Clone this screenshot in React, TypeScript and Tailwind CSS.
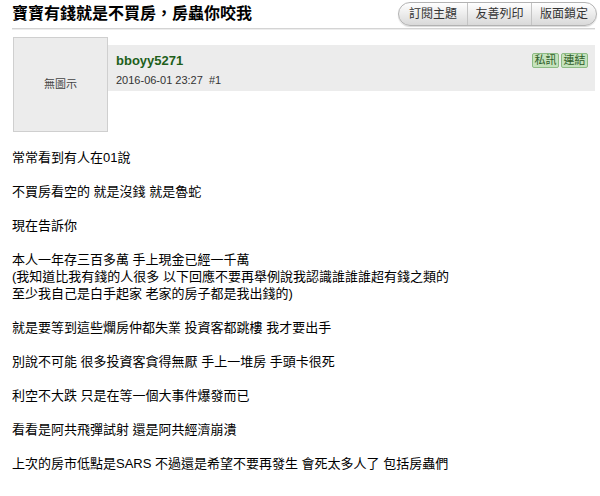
import React from 'react';

const FONT = '"Liberation Sans", Arial, "Noto Sans CJK TC", sans-serif';

const lines: string[][] = [
  ['常常看到有人在01說'],
  ['不買房看空的 就是沒錢 就是魯蛇'],
  ['現在告訴你'],
  [
    '本人一年存三百多萬 手上現金已經一千萬',
    '(我知道比我有錢的人很多 以下回應不要再舉例說我認識誰誰誰超有錢之類的',
    '至少我自己是白手起家 老家的房子都是我出錢的)',
  ],
  ['就是要等到這些爛房仲都失業 投資客都跳樓 我才要出手'],
  ['別說不可能 很多投資客貪得無厭 手上一堆房 手頭卡很死'],
  ['利空不大跌 只是在等一個大事件爆發而已'],
  ['看看是阿共飛彈試射 還是阿共經濟崩潰'],
  ['上次的房市低點是SARS 不過還是希望不要再發生 會死太多人了 包括房蟲們'],
];

function TopButtons() {
  const items = [
    { label: '訂閱主題', w: 'w-[68px]' },
    { label: '友善列印', w: 'w-[64px]' },
    { label: '版面鎖定', w: 'w-[65px]' },
  ];
  return (
    <div className="flex h-[24px] rounded-full border border-[#b3b3b3] bg-gradient-to-b from-[#ffffff] to-[#d9d9d9] overflow-hidden shadow-[0_1px_1px_rgba(0,0,0,0.15)]">
      {items.map((it, i) => (
        <div
          key={it.label}
          className={`${it.w} flex items-center justify-center text-[12px] text-[#333] ${
            i > 0 ? 'border-l border-[#c4c4c4]' : ''
          }`}
        >
          {it.label}
        </div>
      ))}
    </div>
  );
}

function SmallButton({ label }: { label: string }) {
  return (
    <div className="h-[15px] w-[27px] flex items-center justify-center rounded-[2px] border border-[#8dbb84] bg-[#c5e3bd] text-[11px] leading-none text-[#2d5b26]">
      {label}
    </div>
  );
}

export default function App() {
  return (
    <div className="w-[600px] h-[496px] bg-white overflow-hidden text-black" style={{ fontFamily: FONT }}>
      {/* Title row */}
      <div className="flex items-center justify-between h-[26px] pl-3 pr-[3px] pt-[1px]">
        <h1 className="text-[16px] font-bold leading-none">寶寶有錢就是不買房，房蟲你咬我</h1>
        <TopButtons />
      </div>
      <div className="ml-3 mr-[5px] mt-[2px] border-t border-[#d4d4d4] border-b border-b-[#ededed]" />

      {/* Post header */}
      <div className="flex ml-[13px] mr-[5px] mt-[7px]">
        <div className="w-[95px] h-[95px] shrink-0 bg-[#ececec] border border-[#cfcfcf] flex items-center justify-center text-[11px] text-[#444]">
          無圖示
        </div>
        <div className="flex-1 mt-[8px] h-[46px] bg-[#ececec] flex justify-between pl-2 pr-[7px]">
          <div className="pt-[8px]">
            <div className="text-[13px] font-bold leading-[16px] text-[#215f1a]">bboyy5271</div>
            <div className="text-[11px] leading-[14px] text-[#333] mt-[4px]">
              2016-06-01 23:27&nbsp;&nbsp;#1
            </div>
          </div>
          <div className="flex gap-[2px] pt-[8px]">
            <SmallButton label="私訊" />
            <SmallButton label="連結" />
          </div>
        </div>
      </div>

      {/* Post body */}
      <div className="pl-3 mt-[17px] text-[13px] leading-[17px] text-black">
        {lines.map((para, i) => (
          <div key={i} className="mb-[17px]">
            {para.map((l) => (
              <div key={l} className="whitespace-pre">
                {l}
              </div>
            ))}
          </div>
        ))}
      </div>
    </div>
  );
}
